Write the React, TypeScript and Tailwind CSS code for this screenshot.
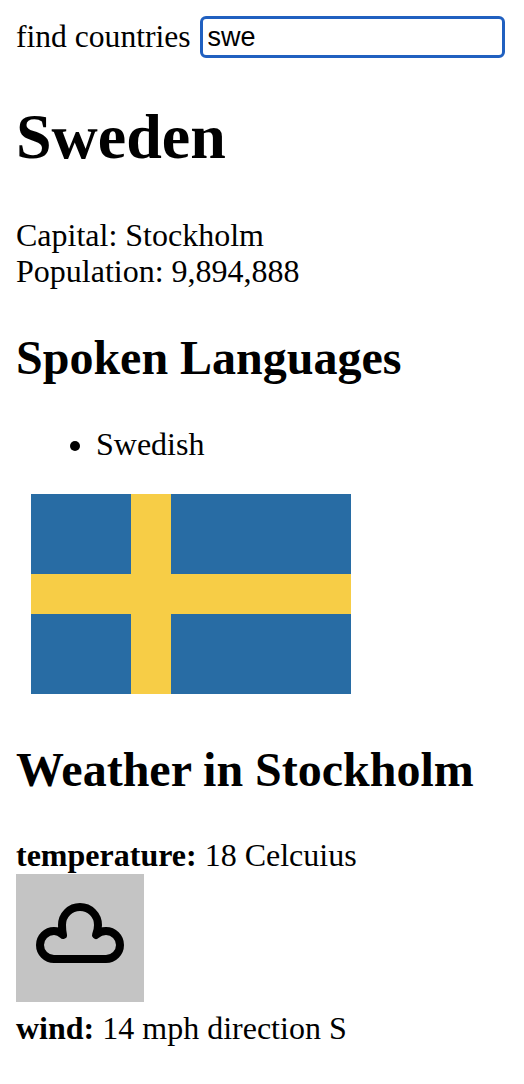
export default function App() {
  return (
    <div className="m-4 text-[32px] leading-[36px] text-black font-['Liberation_Serif',serif]">
      <div className="flex items-center h-[42px]">
        <span className="text-[31.6px]">find countries</span>
        <input readOnly value="swe" className="ml-[9px] w-[305px] h-[42px] border-[3px] border-[#2060c0] rounded-[6px] bg-white px-[5px] text-[27px] font-['Liberation_Sans',sans-serif] outline-none" />
      </div>
      <h1 className="mt-[42px] text-[64px] leading-[74px] font-bold">Sweden</h1>
      <div className="mt-[43px]">Capital: Stockholm</div>
      <div>Population: 9,894,888</div>
      <h2 className="mt-[41px] text-[48px] leading-[55px] font-bold">Spoken Languages</h2>
      <ul className="mt-[41px] pl-[80px] list-disc"><li>Swedish</li></ul>
      <div className="mt-[32px] ml-[15px] w-[320px] h-[200px]">
        <svg viewBox="0 0 320 200" width="320" height="200" className="block">
          <rect width="320" height="200" fill="#286ca4" />
          <rect x="100" width="40" height="200" fill="#f7cd46" />
          <rect y="80" width="320" height="40" fill="#f7cd46" />
        </svg>
      </div>
      <h2 className="mt-[48px] text-[48px] leading-[55px] font-bold">Weather in Stockholm</h2>
      <div className="mt-[40px] leading-[37px]"><b>temperature:</b> 18 Celcuius</div>
      <div className="w-[128px] h-[128px] bg-[#c4c4c4] flex items-center justify-center">
        <svg viewBox="0 0 128 128" width="128" height="128" fill="none" stroke="#000" strokeWidth="8" strokeLinejoin="round" strokeLinecap="round" className="blur-[0.7px]">
          <path d="M38 85 H90 A14 14 0 0 0 90 57 Q84 57 80 61 Q82 56 82 51 A18 18 0 0 0 46 51 Q46 56 47 61 Q43 57 38 57 A14 14 0 0 0 38 85 Z" />
        </svg>
      </div>
      <div className="mt-[8px]"><b>wind:</b> 14 mph direction S</div>
    </div>
  );
}
